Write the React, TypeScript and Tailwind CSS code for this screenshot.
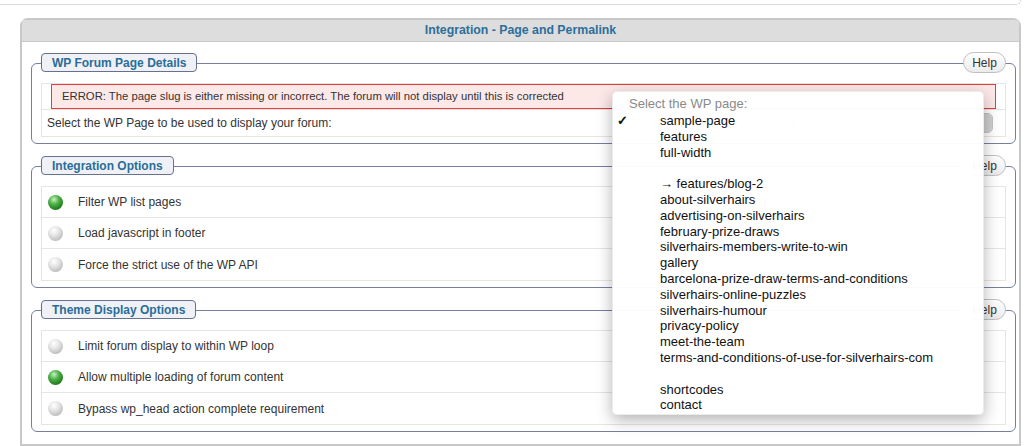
import React from "react";

const integrationRows = [
  { label: "Filter WP list pages", on: true },
  { label: "Load javascript in footer", on: false },
  { label: "Force the strict use of the WP API", on: false },
];

const themeRows = [
  { label: "Limit forum display to within WP loop", on: false },
  { label: "Allow multiple loading of forum content", on: true },
  { label: "Bypass wp_head action complete requirement", on: false },
];

const pages = [
  "sample-page",
  "features",
  "full-width",
  "",
  "→ features/blog-2",
  "about-silverhairs",
  "advertising-on-silverhairs",
  "february-prize-draws",
  "silverhairs-members-write-to-win",
  "gallery",
  "barcelona-prize-draw-terms-and-conditions",
  "silverhairs-online-puzzles",
  "silverhairs-humour",
  "privacy-policy",
  "meet-the-team",
  "terms-and-conditions-of-use-for-silverhairs-com",
  "",
  "shortcodes",
  "contact",
];

function Bulb({ on }: { on: boolean }) {
  return on ? (
    <span className="block w-[15px] h-[15px] rounded-full bg-[radial-gradient(circle_at_40%_30%,#c8f2c0_0%,#4fb24a_35%,#23801f_70%,#15591a_100%)]" />
  ) : (
    <span className="block w-[15px] h-[15px] rounded-full bg-[radial-gradient(circle_at_40%_30%,#ffffff_0%,#e6e6e6_35%,#c4c4c4_70%,#9c9c9c_100%)]" />
  );
}

function Section({
  title,
  children,
  className = "",
}: {
  title: string;
  children: React.ReactNode;
  className?: string;
}) {
  return (
    <div className={className}>
      {/* legend + help sit on the top border */}
      <div className="relative z-10 flex items-center justify-between h-[21px] pl-[10px] pr-[10px] -mb-[10px]">
        <div className="h-[19px] px-[10px] flex items-center rounded-[4px] border border-[#66708f] bg-[#eff1f6] text-[12px] font-bold text-[#2a6d98]">
          {title}
        </div>
        <div className="h-[21px] w-[43px] flex items-center justify-center rounded-full border border-[#bfbfbf] bg-gradient-to-b from-white to-[#ebebeb] text-[12px] text-[#333]">
          Help
        </div>
      </div>
      <div className="border border-[#767fa1] rounded-[6px] pt-[19px] pb-[6px] px-[9px]">
        {children}
      </div>
    </div>
  );
}

function OptionRows({ rows }: { rows: { label: string; on: boolean }[] }) {
  return (
    <div className="border border-[#e5e5e5] divide-y divide-[#e5e5e5]">
      {rows.map((r) => (
        <div key={r.label} className="h-[31px] flex items-center pl-[6px]">
          <Bulb on={r.on} />
          <span className="ml-[15px] text-[12px] text-[#333]">{r.label}</span>
        </div>
      ))}
    </div>
  );
}

export default function App() {
  return (
    <div
      className="relative w-[1024px] h-[446px] bg-white overflow-hidden"
      style={{ fontFamily: '"Liberation Sans", Arial, sans-serif' }}
    >
      <div className="w-[1021px] h-[5px] border-b border-r border-[#dadada] rounded-br-[6px]" />

      <div className="ml-[20px] mt-[13px] w-[1001px] border-2 border-[#c8c8c8] rounded-t-[8px]">
        <div className="h-[22px] bg-[#dddddd] border-b border-[#c8c8c8] flex items-center justify-center text-[12.3px] font-bold text-[#2c6f9a]">
          Integration - Page and Permalink
        </div>

        <div className="pt-[10px] pb-[12px] pl-[9px] pr-[3px]">
          <Section title="WP Forum Page Details">
            <div className="border border-[#e5e5e5] divide-y divide-[#e5e5e5]">
              <div className="h-[26px] px-[9px]">
                <div className="h-full flex items-center pl-[10px] border border-[#e23c3c] bg-[#fde8e8] text-[11.3px] text-[#333]">
                  ERROR: The page slug is either missing or incorrect. The forum will not display until this is corrected
                </div>
              </div>
              <div className="h-[26px] flex items-center justify-between pl-[5px] pr-[12px]">
                <span className="text-[12px] text-[#333]">
                  Select the WP Page to be used to display your forum:
                </span>
                <div className="h-[20px] w-[200px] flex items-center justify-end rounded-[5px] border border-[#c4c4c4] bg-white">
                  <div className="h-[18px] w-[16px] rounded-r-[4px] bg-[#cfcfcf]" />
                </div>
              </div>
            </div>
          </Section>

          <Section title="Integration Options" className="mt-[11px]">
            <OptionRows rows={integrationRows} />
          </Section>

          <Section title="Theme Display Options" className="mt-[11px]">
            <OptionRows rows={themeRows} />
          </Section>
        </div>
      </div>

      {/* open select menu */}
      <div className="absolute z-30 left-[612px] top-[91px] w-[372px] h-[324px] rounded-[5px] bg-white/[0.97] shadow-[0_5px_16px_rgba(0,0,0,0.3)] border border-[#ececec] pt-[4px] text-[13px] text-[#111]">
        <div className="h-[17px] leading-[16px] pl-[16px] text-[#8a8a8a]">Select the WP page:</div>
        {pages.map((p, i) => (
          <div key={i} className="relative h-[15.8px] leading-[15.8px] pl-[47px] whitespace-nowrap">
            {i === 0 && <span className="absolute left-[4px] top-0 font-bold">✓</span>}
            {p}
          </div>
        ))}
      </div>
    </div>
  );
}
